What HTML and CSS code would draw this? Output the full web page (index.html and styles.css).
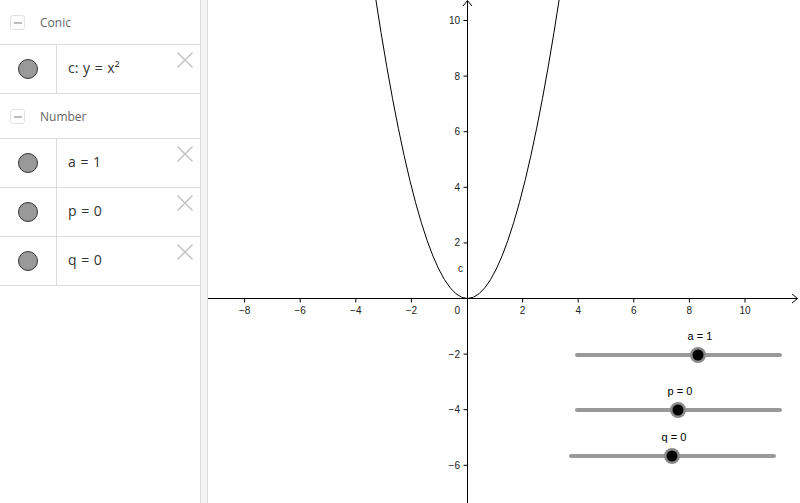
FILE: index.html
```html
<!DOCTYPE html>
<html>
<head>
<meta charset="utf-8">
<link rel="stylesheet" href="styles.css">
</head>
<body>
<div class="app">
  <div class="algebra">
    <div class="group">
      <span class="toggle"><span class="minus"></span></span>
      <span class="group-title">Conic</span>
    </div>
    <div class="item">
      <div class="marble-cell"><span class="marble"></span></div>
      <div class="expr">c: y = x²</div>
      <svg class="close" viewBox="0 0 18 18"><path d="M1.5 1.5L16.5 16.5M16.5 1.5L1.5 16.5"/></svg>
    </div>
    <div class="group">
      <span class="toggle"><span class="minus"></span></span>
      <span class="group-title">Number</span>
    </div>
    <div class="item">
      <div class="marble-cell"><span class="marble"></span></div>
      <div class="expr">a = 1</div>
      <svg class="close" viewBox="0 0 18 18"><path d="M1.5 1.5L16.5 16.5M16.5 1.5L1.5 16.5"/></svg>
    </div>
    <div class="item">
      <div class="marble-cell"><span class="marble"></span></div>
      <div class="expr">p = 0</div>
      <svg class="close" viewBox="0 0 18 18"><path d="M1.5 1.5L16.5 16.5M16.5 1.5L1.5 16.5"/></svg>
    </div>
    <div class="item">
      <div class="marble-cell"><span class="marble"></span></div>
      <div class="expr">q = 0</div>
      <svg class="close" viewBox="0 0 18 18"><path d="M1.5 1.5L16.5 16.5M16.5 1.5L1.5 16.5"/></svg>
    </div>
  </div>
  <div class="splitter"></div>
  <div class="graphics">
    <svg class="canvas" width="592" height="503" viewBox="0 0 592 503">
      <g class="axes">
        <line x1="0" y1="298.5" x2="589" y2="298.5"/>
        <polyline points="584,294 589.5,298.5 584,303" fill="none"/>
        <line x1="259.5" y1="1" x2="259.5" y2="503"/>
        <polyline points="255,6 259.5,0.5 264,6" fill="none"/>
        <line x1="36.6" y1="298.5" x2="36.6" y2="302.5"/>
        <line x1="92.2" y1="298.5" x2="92.2" y2="302.5"/>
        <line x1="147.8" y1="298.5" x2="147.8" y2="302.5"/>
        <line x1="203.4" y1="298.5" x2="203.4" y2="302.5"/>
        <line x1="314.6" y1="298.5" x2="314.6" y2="302.5"/>
        <line x1="370.2" y1="298.5" x2="370.2" y2="302.5"/>
        <line x1="425.8" y1="298.5" x2="425.8" y2="302.5"/>
        <line x1="481.4" y1="298.5" x2="481.4" y2="302.5"/>
        <line x1="537" y1="298.5" x2="537" y2="302.5"/>
        <line x1="255.5" y1="20.5" x2="259.5" y2="20.5"/>
        <line x1="255.5" y1="76.1" x2="259.5" y2="76.1"/>
        <line x1="255.5" y1="131.7" x2="259.5" y2="131.7"/>
        <line x1="255.5" y1="187.3" x2="259.5" y2="187.3"/>
        <line x1="255.5" y1="242.9" x2="259.5" y2="242.9"/>
        <line x1="255.5" y1="354.1" x2="259.5" y2="354.1"/>
        <line x1="255.5" y1="409.7" x2="259.5" y2="409.7"/>
        <line x1="255.5" y1="465.3" x2="259.5" y2="465.3"/>
      </g>
      <g class="xlabels">
        <text x="36.6" y="314">−8</text>
        <text x="92.2" y="314">−6</text>
        <text x="147.8" y="314">−4</text>
        <text x="203.4" y="314">−2</text>
        <text x="314.6" y="314">2</text>
        <text x="370.2" y="314">4</text>
        <text x="425.8" y="314">6</text>
        <text x="481.4" y="314">8</text>
        <text x="537" y="314">10</text>
      </g>
      <g class="ylabels">
        <text x="252" y="314">0</text>
        <text x="252" y="24">10</text>
        <text x="252" y="79.6">8</text>
        <text x="252" y="135.2">6</text>
        <text x="252" y="190.8">4</text>
        <text x="252" y="246.4">2</text>
        <text x="252" y="357.6">−2</text>
        <text x="252" y="413.2">−4</text>
        <text x="252" y="468.8">−6</text>
      </g>
      <path class="curve" d="M167.26,-4.2 Q259.5,601.2 351.74,-4.2"/>
      <text class="curve-label" x="250" y="272">c</text>
      <g class="slider">
        <text x="492" y="340">a = 1</text>
        <line x1="369" y1="355" x2="572" y2="355"/>
        <circle class="ring" cx="490" cy="355" r="8"/>
        <circle class="knob" cx="490" cy="355" r="5.5"/>
      </g>
      <g class="slider">
        <text x="472" y="395">p = 0</text>
        <line x1="369" y1="410" x2="572" y2="410"/>
        <circle class="ring" cx="470" cy="410" r="8"/>
        <circle class="knob" cx="470" cy="410" r="5.5"/>
      </g>
      <g class="slider">
        <text x="466" y="441">q = 0</text>
        <line x1="363" y1="456" x2="566" y2="456"/>
        <circle class="ring" cx="464" cy="456" r="8"/>
        <circle class="knob" cx="464" cy="456" r="5.5"/>
      </g>
    </svg>
  </div>
</div>
</body>
</html>
```
FILE: styles.css
```css
html, body {
  margin: 0;
  padding: 0;
  background: #fff;
}
.app {
  display: flex;
  width: 800px;
  height: 503px;
  overflow: hidden;
}
.algebra {
  width: 200px;
  flex: none;
  border-right: 1px solid #dcdcdc;
  font-family: "Open Sans", "Liberation Sans", sans-serif;
}
.group {
  height: 45px;
  display: flex;
  align-items: center;
  border-bottom: 1px solid #dcdcdc;
  box-sizing: border-box;
}
.toggle {
  width: 15px;
  height: 15px;
  margin-left: 10px;
  margin-top: 1px;
  border: 1px solid #e2e2e2;
  border-radius: 3px;
  display: flex;
  align-items: center;
  justify-content: center;
  box-sizing: border-box;
}
.minus {
  width: 8px;
  height: 2px;
  background: #bdbdbd;
}
.group-title {
  margin-left: 15px;
  font-size: 12px;
  color: #666;
}
.item {
  height: 49px;
  box-sizing: border-box;
  display: flex;
  align-items: stretch;
  border-bottom: 1px solid #dcdcdc;
  position: relative;
}
.marble-cell {
  width: 56px;
  border-right: 1px solid #dcdcdc;
  display: flex;
  align-items: center;
  justify-content: center;
}
.marble {
  width: 18px;
  height: 18px;
  border-radius: 50%;
  background: #999;
  border: 1px solid #333;
}
.expr {
  display: flex;
  align-items: center;
  padding-left: 11px;
  padding-bottom: 4px;
  font-size: 14px;
  word-spacing: 1px;
  color: #333;
}
.close {
  position: absolute;
  right: 6px;
  top: 6px;
  width: 18px;
  height: 18px;
  fill: none;
  stroke: #c6c6c6;
  stroke-width: 1.6;
}
.splitter {
  width: 6px;
  flex: none;
  background: #f4f4f4;
  border-right: 1px solid #dcdcdc;
}
.graphics {
  flex: 1;
  position: relative;
}
.canvas {
  display: block;
}
.axes line, .axes polyline {
  stroke: #000;
  stroke-width: 1;
}
.xlabels text, .ylabels text, .curve-label {
  font-family: "Liberation Sans", Arial, sans-serif;
  font-size: 10px;
  fill: #222;
}
.xlabels text {
  text-anchor: middle;
}
.ylabels text {
  text-anchor: end;
}
.curve {
  fill: none;
  stroke: #000;
  stroke-width: 1;
}
.slider line {
  stroke: #999;
  stroke-width: 4;
  stroke-linecap: round;
}
.slider .ring {
  fill: #8a8a8a;
}
.slider .knob {
  fill: #000;
}
.slider text {
  font-family: "Liberation Sans", Arial, sans-serif;
  font-size: 11px;
  fill: #000;
  text-anchor: middle;
}
```
